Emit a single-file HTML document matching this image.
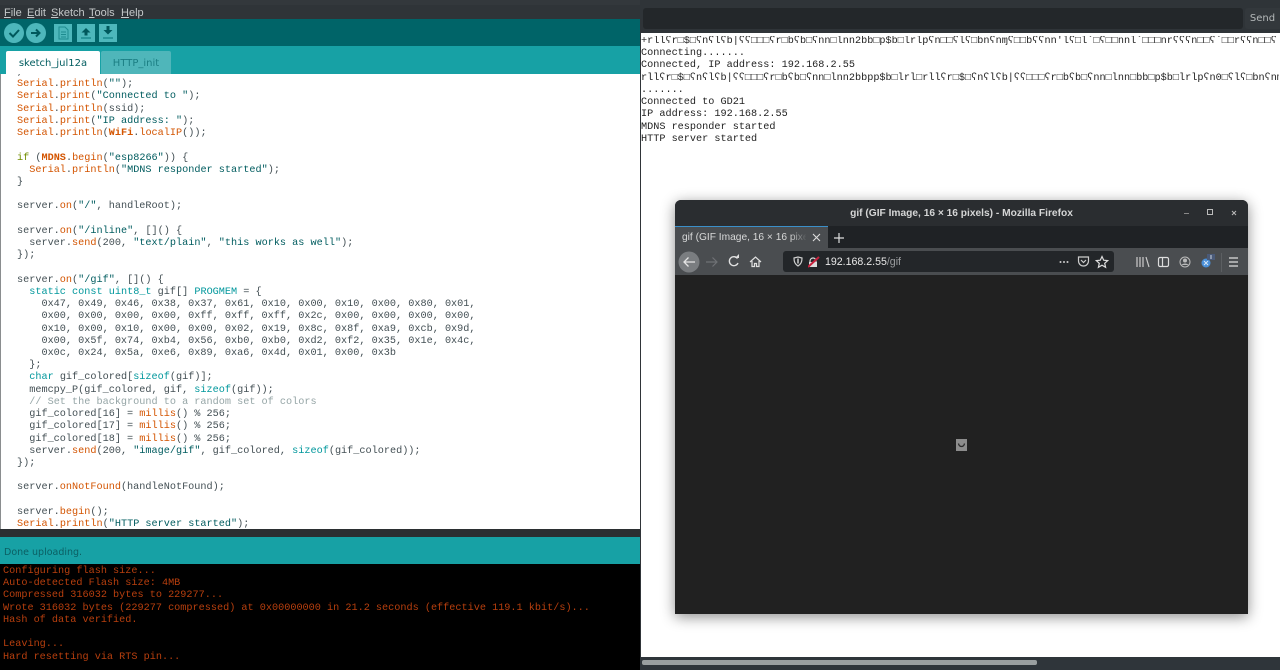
<!DOCTYPE html>
<html><head><meta charset="utf-8"><title>Arduino</title>
<style>
html,body{margin:0;padding:0;width:1280px;height:670px;overflow:hidden;background:#fff}
.a{position:absolute}
#w{position:absolute;left:0;top:0;width:1280px;height:670px;overflow:hidden;filter:blur(.35px)}
pre{margin:0;font-family:"Liberation Mono","DejaVu Sans Mono",monospace;font-size:10.2px;line-height:12.22px}
.o{color:#d35400}.b{color:#d35400;font-weight:bold}.t{color:#00979c}.s{color:#005c5f}.g{color:#95a5a6}.k{color:#728e00}
.sa{font-family:"Liberation Sans","DejaVu Sans",sans-serif}
.dv{font-family:"DejaVu Sans","Liberation Sans",sans-serif}
.m{position:absolute;top:6px;font-size:11px;line-height:14px;color:#c4c8c9;font-family:"Liberation Sans","DejaVu Sans",sans-serif}
</style></head><body><div id="w">
<div class="a" style="left:0;top:0;width:640px;height:670px;background:#2f3438;overflow:hidden">
 <div class="a" style="left:0;top:0;width:640px;height:5px;background:#33383c"></div>
 <div class="m" style="left:4px"><u>F</u>ile</div><div class="m" style="left:27px"><u>E</u>dit</div><div class="m" style="left:51px"><u>S</u>ketch</div><div class="m" style="left:89px"><u>T</u>ools</div><div class="m" style="left:121px"><u>H</u>elp</div>
 <div class="a" style="left:0;top:19px;width:640px;height:27px;background:#006468"></div>
 <svg class="a" style="left:0;top:19px" width="130" height="27" viewBox="0 0 130 27">
  <circle cx="14" cy="14" r="10" fill="#4db7bb"/><circle cx="36" cy="14" r="10" fill="#4db7bb"/>
  <path d="M9.500 14l3.500 3.500 6-6.500" fill="none" stroke="#00585c" stroke-width="2"/>
  <path d="M31 14h8M36 10.500l3.500 3.500-3.500 3.500" fill="none" stroke="#00585c" stroke-width="2"/>
  <rect x="54" y="5" width="18" height="18" fill="#4db7bb"/><rect x="77" y="5" width="18" height="18" fill="#4db7bb"/><rect x="99" y="5" width="18" height="18" fill="#4db7bb"/>
  <path d="M59 8h6l3 3v9h-9zM61 13h5M61 15.500h5M61 18h5" fill="none" stroke="#1d8b8f" stroke-width="1"/>
  <path d="M86 9l4.500 4.500h-3v3h-3v-3h-3z" fill="#00585c"/><path d="M81 19h10" stroke="#1d8b8f" stroke-width="1.500"/>
  <path d="M108 15.500l-4.500-4.500h3V7h3v4h3z" fill="#00585c"/><path d="M103 19h10" stroke="#1d8b8f" stroke-width="1.500"/>
 </svg>
 <div class="a" style="left:0;top:46px;width:640px;height:28px;background:#17a1a5"></div>
 <div class="a dv" style="left:6px;top:53px;width:94px;height:21px;background:#fff;font-size:10px;line-height:21px;color:#005c5f;text-align:center;white-space:nowrap">sketch_jul12a</div>
 <div class="a" style="left:6px;top:51px;width:94px;height:3px;background:#fff;border-radius:2px 2px 0 0"></div>
 <div class="a dv" style="left:101px;top:51px;width:70px;height:23px;background:#4fb6ba;border-radius:2px 2px 0 0;font-size:10px;line-height:25px;color:#1b7e83;text-align:center">HTTP_init</div>
 <div class="a" style="left:1px;top:74px;width:639px;height:455px;background:#fff;overflow:hidden">
<pre class="a" style="left:16px;top:-7px;color:#434f54">,
<span class="o">Serial</span>.<span class="o">println</span>(<span class="s">""</span>);
<span class="o">Serial</span>.<span class="o">print</span>(<span class="s">"Connected to "</span>);
<span class="o">Serial</span>.<span class="o">println</span>(ssid);
<span class="o">Serial</span>.<span class="o">print</span>(<span class="s">"IP address: "</span>);
<span class="o">Serial</span>.<span class="o">println</span>(<span class="b">WiFi</span>.<span class="o">localIP</span>());

<span class="k">if</span> (<span class="b">MDNS</span>.<span class="o">begin</span>(<span class="s">"esp8266"</span>)) {
  <span class="o">Serial</span>.<span class="o">println</span>(<span class="s">"MDNS responder started"</span>);
}

server.<span class="o">on</span>(<span class="s">"/"</span>, handleRoot);

server.<span class="o">on</span>(<span class="s">"/inline"</span>, []() {
  server.<span class="o">send</span>(200, <span class="s">"text/plain"</span>, <span class="s">"this works as well"</span>);
});

server.<span class="o">on</span>(<span class="s">"/gif"</span>, []() {
  <span class="t">static</span> <span class="t">const</span> <span class="t">uint8_t</span> gif[] <span class="t">PROGMEM</span> = {
    0x47, 0x49, 0x46, 0x38, 0x37, 0x61, 0x10, 0x00, 0x10, 0x00, 0x80, 0x01,
    0x00, 0x00, 0x00, 0x00, 0xff, 0xff, 0xff, 0x2c, 0x00, 0x00, 0x00, 0x00,
    0x10, 0x00, 0x10, 0x00, 0x00, 0x02, 0x19, 0x8c, 0x8f, 0xa9, 0xcb, 0x9d,
    0x00, 0x5f, 0x74, 0xb4, 0x56, 0xb0, 0xb0, 0xd2, 0xf2, 0x35, 0x1e, 0x4c,
    0x0c, 0x24, 0x5a, 0xe6, 0x89, 0xa6, 0x4d, 0x01, 0x00, 0x3b
  };
  <span class="t">char</span> gif_colored[<span class="t">sizeof</span>(gif)];
  memcpy_P(gif_colored, gif, <span class="t">sizeof</span>(gif));
  <span class="g">// Set the background to a random set of colors</span>
  gif_colored[16] = <span class="o">millis</span>() % 256;
  gif_colored[17] = <span class="o">millis</span>() % 256;
  gif_colored[18] = <span class="o">millis</span>() % 256;
  server.<span class="o">send</span>(200, <span class="s">"image/gif"</span>, gif_colored, <span class="t">sizeof</span>(gif_colored));
});

server.<span class="o">onNotFound</span>(handleNotFound);

server.<span class="o">begin</span>();
<span class="o">Serial</span>.<span class="o">println</span>(<span class="s">"HTTP server started"</span>);</pre>
 </div>
 <div class="a" style="left:0;top:74px;width:1px;height:455px;background:#8a8d8f"></div>
 <div class="a" style="left:0;top:529px;width:640px;height:8px;background:#2b2f32"></div>
 <div class="a" style="left:0;top:537px;width:640px;height:27px;background:#17a1a5"></div>
 <div class="a dv" style="left:4px;top:546px;font-size:9.500px;line-height:13px;color:#0b5f63">Done uploading.</div>
 <div class="a" style="left:0;top:564px;width:640px;height:106px;background:#000"></div>
 <pre class="a" style="left:3px;top:566px;color:#b83f0e">Configuring flash size...
Auto-detected Flash size: 4MB
Compressed 316032 bytes to 229277...
Wrote 316032 bytes (229277 compressed) at 0x00000000 in 21.2 seconds (effective 119.1 kbit/s)...
Hash of data verified.

Leaving...
Hard resetting via RTS pin...</pre>
</div>
<div class="a" style="left:640px;top:0;width:640px;height:670px;background:#fff;overflow:hidden">
 <div class="a" style="left:0;top:0;width:640px;height:33px;background:#2f3438"></div>
 <div class="a" style="left:3px;top:8px;width:600px;height:21px;background:#23272a;border-radius:3px"></div>
 <div class="a dv" style="left:605px;top:8px;width:35px;height:21px;background:#33383c;font-size:10px;line-height:21px;color:#b4b8b9;text-align:center;border-radius:3px 0 0 3px">Send</div>
 <div class="a" style="left:0;top:33px;width:1px;height:624px;background:#2f3438"></div>
 <pre class="a" style="left:1px;top:36px;width:638px;height:120px;overflow:hidden;color:#222;white-space:pre">+rllʕr□$□ʕnʕlʕb|ʕʕ□□□ʕr□bʕb□ʕnn□lnn2bb□p$b□lrlpʕn□□ʕlʕ□bnʕnɱʕ□□bʕʕnn'lʕ□l`□ʕ□□nnl`□□□nrʕʕʕn□□ʕ`□□rʕʕn□□ʕ
Connecting.......
Connected, IP address: 192.168.2.55
rllʕr□$□ʕnʕlʕb|ʕʕ□□□ʕr□bʕb□ʕnn□lnn2bbpp$b□lrl□rllʕr□$□ʕnʕlʕb|ʕʕ□□□ʕr□bʕb□ʕnn□lnn□bb□p$b□lrlpʕn0□ʕlʕ□bnʕnɱʕ□□
.......
Connected to GD21
IP address: 192.168.2.55
MDNS responder started
HTTP server started</pre>
 <div class="a" style="left:0;top:657px;width:640px;height:13px;background:#2f353a"></div>
 <div class="a" style="left:2px;top:660px;width:395px;height:5px;background:#9a9fa0;border-radius:2px"></div>
</div>
<div class="a" style="left:675px;top:200px;width:573px;height:414px;background:#202020;border-radius:6px 6px 0 0;box-shadow:0 3px 14px rgba(0,0,0,.45);overflow:hidden">
 <div class="a" style="left:0;top:0;width:573px;height:26px;background:#2a2d30"></div>
 <div class="a sa" style="left:0;top:0;width:573px;text-align:center;font-size:10.200px;font-weight:bold;line-height:27px;color:#d5d6d6">gif (GIF Image, 16 × 16 pixels) - Mozilla Firefox</div>
 <svg class="a" style="left:505px;top:6px" width="62" height="14" viewBox="0 0 62 14"><path d="M4 7.500h5" stroke="#888" stroke-width="1"/><rect x="27.500" y="3.500" width="5" height="5" fill="none" stroke="#bbb" stroke-width="1"/><path d="M52 5l4 4M56 5l-4 4" stroke="#bbb" stroke-width="1"/></svg>
 <div class="a" style="left:0;top:26px;width:573px;height:22px;background:#1f2225"></div>
 <div class="a" style="left:0;top:26px;width:153px;height:22px;background:#4a4d50;border-top:1px solid #3b8fc9;box-sizing:border-box"></div>
 <div class="a sa" style="left:7px;top:27px;width:124px;height:21px;overflow:hidden;white-space:nowrap;font-size:10.200px;line-height:21px;color:#d8d9d9">gif (GIF Image, 16 × 16 pixels)</div>
 <div class="a" style="left:115px;top:27px;width:17px;height:21px;background:linear-gradient(to right,rgba(74,77,80,0),#4a4d50)"></div>
 <svg class="a" style="left:136px;top:31px" width="34" height="14" viewBox="0 0 34 14"><path d="M2 3l7 7M9 3l-7 7" stroke="#ddd" stroke-width="1.100"/><path d="M28 2v10M23 7h10" stroke="#ddd" stroke-width="1.200"/></svg>
 <div class="a" style="left:0;top:48px;width:573px;height:27px;background:#4a4d50"></div>
 <div class="a" style="left:108px;top:51px;width:331px;height:21px;background:#232629;border-radius:3px"></div>
 <svg class="a" style="left:0;top:48px" width="140" height="27" viewBox="0 0 140 27">
  <circle cx="14" cy="14" r="10.500" fill="#7a7d80"/>
  <path d="M20 14H9M13.500 9.500L9 14l4.500 4.500" fill="none" stroke="#e4e4e4" stroke-width="1.300"/>
  <path d="M42 14H31M37.500 9.500L42 14l-4.500 4.500" fill="none" stroke="#6f7275" stroke-width="1.200"/>
  <path d="M62.500 10.500A4.500 4.500 0 1 0 63 15" fill="none" stroke="#e0e0e0" stroke-width="1.400"/><path d="M60 10h4V6z" fill="#e0e0e0"/>
  <path d="M75 14l5.500-5 5.500 5M77 13v5.500h2.500v-3h2v3H84V13" fill="none" stroke="#e0e0e0" stroke-width="1.200"/>
  <path d="M119 10l4-1 4 1c0 4-1 6-4 8-3-2-4-4-4-8z" fill="none" stroke="#cfcfcf" stroke-width="1.200"/><path d="M123 10.500v5" stroke="#cfcfcf" stroke-width="1.500"/>
 </svg>
 <svg class="a" style="left:133px;top:56px" width="12" height="12" viewBox="0 0 12 12"><path d="M2 7V5a3 3 0 0 1 6 0v1" fill="none" stroke="#ddd" stroke-width="1.200"/><rect x="1" y="6" width="8" height="5" fill="#ddd"/><path d="M0 11L11 1" stroke="#c8203c" stroke-width="2"/></svg>
 <div class="a sa" style="left:150px;top:51px;font-size:10.600px;line-height:22px;color:#e8e8e8">192.168.2.55<span style="color:#9c9ea0">/gif</span></div>
 <svg class="a" style="left:380px;top:48px" width="193" height="27" viewBox="0 0 193 27">
  <circle cx="5.500" cy="14" r="1" fill="#ccc"/><circle cx="9" cy="14" r="1" fill="#ccc"/><circle cx="12.500" cy="14" r="1" fill="#ccc"/>
  <path d="M23.500 9h10v4a5 5 0 0 1-10 0z" fill="none" stroke="#ccc" stroke-width="1.200"/><path d="M26 12l2.500 2.500L31 12" fill="none" stroke="#ccc" stroke-width="1.200"/>
  <path d="M47 8.500l1.700 3.700 4 .4-3 2.700.9 4-3.600-2.100-3.600 2.100.9-4-3-2.700 4-.4z" fill="none" stroke="#ddd" stroke-width="1.200"/>
  <path d="M82 9v10M85 9v10M88 9v10M91 9l3 10" stroke="#ccc" stroke-width="1.200" fill="none"/>
  <rect x="103.500" y="9.500" width="10" height="9" rx="1.500" fill="none" stroke="#ddd" stroke-width="1.200"/><path d="M107.500 9.500v9" stroke="#ddd" stroke-width="1.200"/>
  <circle cx="130" cy="14" r="5" fill="none" stroke="#bbb" stroke-width="1"/><circle cx="130" cy="12.500" r="2" fill="#bbb"/><path d="M126.500 17a4 3 0 0 1 7 0z" fill="#bbb"/>
  <circle cx="151" cy="15" r="4.500" fill="#4a90d9"/><path d="M149 13l4 4M153 13l-4 4" stroke="#d5e6f7" stroke-width="1"/>
  <rect x="152" y="6" width="8" height="6" fill="#4a5a78"/><path d="M156 7v4" stroke="#cfd6e4" stroke-width="1"/>
  <path d="M166.500 5v19" stroke="#5c5f62" stroke-width="1"/>
  <path d="M174 10h9M174 14h9M174 18h9" stroke="#ddd" stroke-width="1.300"/>
 </svg>
 <div class="a" style="left:0;top:75px;width:573px;height:339px;background:#212121"></div>
 <svg class="a" style="left:281px;top:239px" width="11" height="12" viewBox="0 0 11 12"><rect width="11" height="12" fill="#8c8c8c"/><path d="M2.500 4.500c.5 4 5.500 4 6 0" fill="none" stroke="#2a2a2a" stroke-width="1.300"/></svg>
</div>
</div></body></html>
